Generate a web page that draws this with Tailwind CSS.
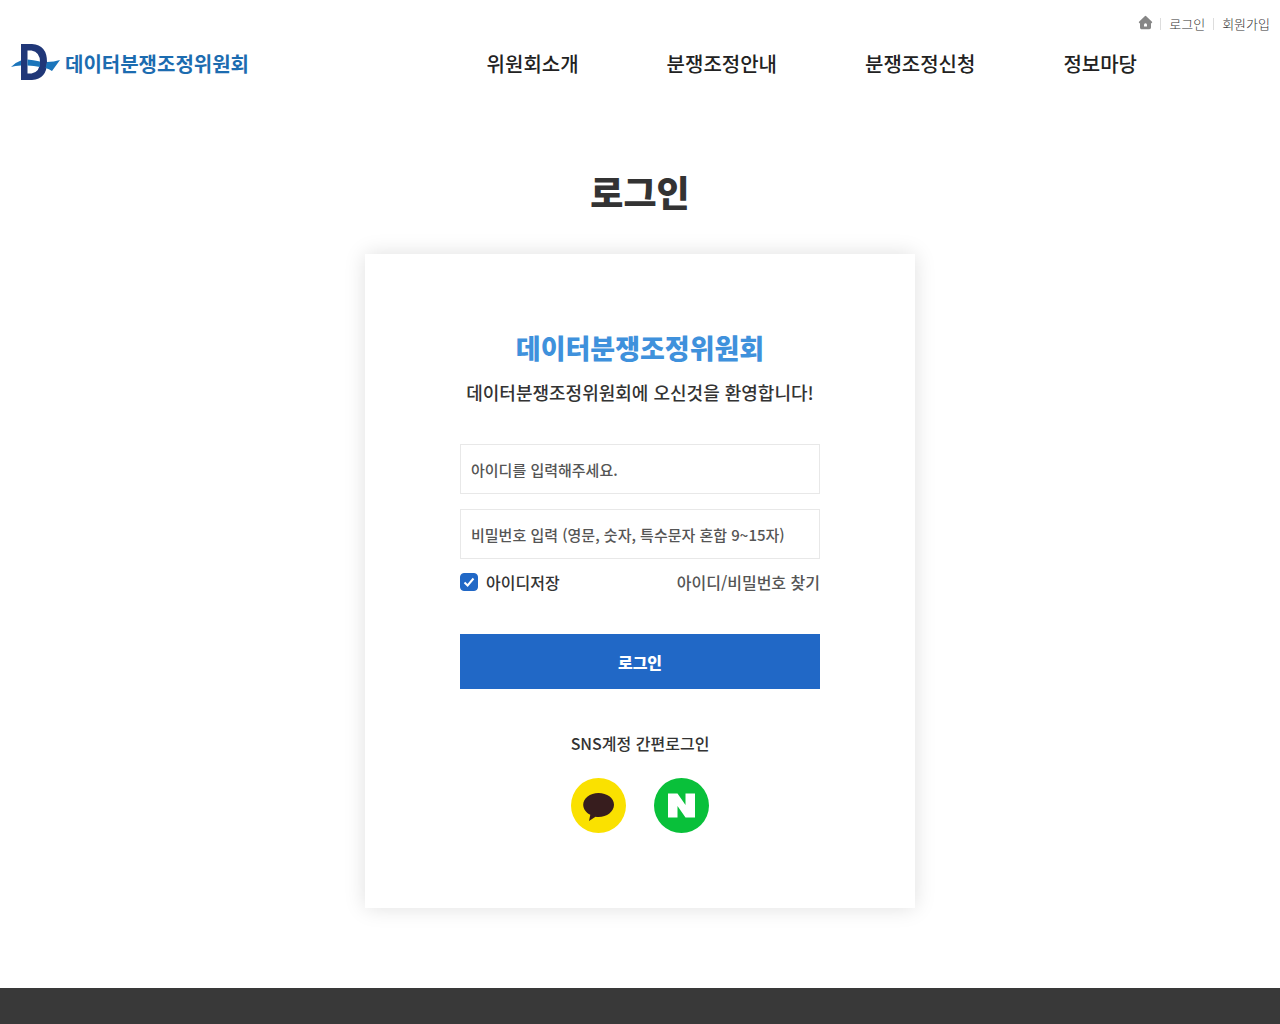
<!DOCTYPE html>
<html lang="ko">
<head>
<meta charset="utf-8">
<meta name="viewport" content="width=device-width, initial-scale=1">
<title>로그인 - 데이터분쟁조정위원회</title>
<script src="https://cdn.jsdelivr.net/npm/@tailwindcss/browser@4"></script>
</head>
<body class="flex min-h-screen flex-col bg-white font-['Noto_Sans_CJK_KR',sans-serif] text-[#333]">
<header class="px-[10px]">
  <ul class="flex h-10 items-center justify-end pt-2 text-[13px] leading-5 font-light text-[#333]">
    <li><a href="#" aria-label="홈" class="block pb-1">
      <svg class="size-[15px]" viewBox="0 0 15 15" aria-hidden="true"><path d="M7.500 1.500 13.500 7.200 12.300 8.200V12.500a1 1 0 0 1-1 1H3.700a1 1 0 0 1-1-1V8.200L1.500 7.200Z" fill="#868686" stroke="#868686" stroke-width="1.400" stroke-linejoin="round"/><path d="M6 11.500V9.800a1.500 1.500 0 0 1 3 0V11.500Z" fill="#fff"/></svg></a></li>
    <li class="ml-[7px] flex items-center before:mr-2 before:h-3 before:w-px before:bg-[#ddd]"><a href="#">로그인</a></li>
    <li class="ml-2 flex items-center before:mr-2 before:h-3 before:w-px before:bg-[#ddd]"><a href="#">회원가입</a></li>
  </ul>
  <div class="flex h-12 items-center justify-between">
    <a href="#" class="flex items-center gap-1">
      <svg class="mb-1 h-[38px] w-[51px]" viewBox="0 0 51 38" aria-hidden="true">
        <path fill-rule="evenodd" d="M11 1H22Q37 2 37 19Q37 36 22 37H11ZM17.500 7.500V30.500H21.500Q30 29 30 19Q30 9 21.500 7.500Z" fill="#203778"/>
        <path d="M1 24Q6 19 11 17.500V22.500Q5 22.500 1 24ZM17.500 16.500Q23 17 30 18.500V24Q24 22.500 17.500 22.500ZM37 19Q44 19 50 17L42 28Q39 26 35.500 25Q36.500 22 37 19Z" fill="#1b75bb"/>
      </svg>
      <span class="text-xl leading-8 font-bold text-[#1c6cb0]">데이터분쟁조정위원회</span>
    </a>
    <nav class="pr-[133px]">
      <ul class="flex gap-[88px] text-xl leading-8 font-medium text-[#222]">
        <li><a href="#">위원회소개</a></li>
        <li><a href="#">분쟁조정안내</a></li>
        <li><a href="#">분쟁조정신청</a></li>
        <li><a href="#">정보마당</a></li>
      </ul>
    </nav>
  </div>
</header>
<main class="flex flex-col items-center px-4 pb-20">
  <h1 class="pt-[78px] text-4xl leading-[50px] font-black">로그인</h1>
  <section class="mt-[38px] w-full max-w-[550px] bg-white px-[95px] pt-[74px] pb-[75px] shadow-[0_0_20px_rgba(0,0,0,0.13)]">
    <h2 class="text-center text-[27px] leading-10 font-black whitespace-nowrap text-[#3f91dc]">데이터분쟁조정위원회</h2>
    <p class="mt-2 text-center text-lg leading-8 font-medium whitespace-nowrap">데이터분쟁조정위원회에 오신것을 환영합니다!</p>
    <form class="mt-9">
      <input type="text" aria-label="아이디" placeholder="아이디를 입력해주세요." class="block h-[50px] w-full border border-[#e8e8e8] px-[10px] text-[15px] font-medium placeholder:text-[#555]">
      <input type="password" aria-label="비밀번호" placeholder="비밀번호 입력 (영문, 숫자, 특수문자 혼합 9~15자)" class="mt-[15px] block h-[50px] w-full border border-[#e8e8e8] px-[10px] text-[15px] font-medium placeholder:text-[#555]">
      <div class="mt-[11px] flex items-center justify-between text-base leading-6 font-medium">
        <div class="flex items-center gap-2">
          <span class="relative block size-[18px]">
            <input id="save" type="checkbox" checked class="peer block size-[18px] appearance-none rounded border border-[#2168c6] bg-white checked:bg-[#2168c6]">
            <svg class="pointer-events-none absolute inset-0 hidden size-[18px] peer-checked:block" viewBox="0 0 18 18" fill="none" stroke="#fff" stroke-width="2" aria-hidden="true"><path d="M4.500 9.500 7.600 12.500 13.500 5.500"/></svg>
          </span>
          <label for="save">아이디저장</label>
        </div>
        <a href="#" class="text-[#555]">아이디/비밀번호 찾기</a>
      </div>
      <button type="submit" class="mt-10 block h-[55px] w-full bg-[#2168c6] text-base font-black text-white">로그인</button>
    </form>
    <p class="mt-[42px] text-center text-base leading-6 font-medium">SNS계정 간편로그인</p>
    <div class="mt-[23px] flex justify-center gap-7">
      <a href="#" aria-label="카카오 로그인">
        <svg class="size-[55px]" viewBox="0 0 55 55" aria-hidden="true"><circle cx="27.500" cy="27.500" r="27.500" fill="#fae100"/><path d="M27.500 15C19 15 12.200 20.200 12.200 26.800C12.200 31 15 34.700 19.300 36.800L18 43L24.500 38.800Q26 39 27.500 39C36 39 43 33.600 43 26.800S36 15 27.500 15Z" fill="#371d1e"/></svg>
      </a>
      <a href="#" aria-label="네이버 로그인">
        <svg class="size-[55px]" viewBox="0 0 55 55" aria-hidden="true"><circle cx="27.500" cy="27.500" r="27.500" fill="#09c03a"/><path d="M14 15.500H23.500L31.500 27V15.500H41V39.500H31.500L23.500 28V39.500H14Z" fill="#fff"/></svg>
      </a>
    </div>
  </section>
</main>
<footer class="min-h-9 grow bg-[#393939]"></footer>
</body>
</html>
